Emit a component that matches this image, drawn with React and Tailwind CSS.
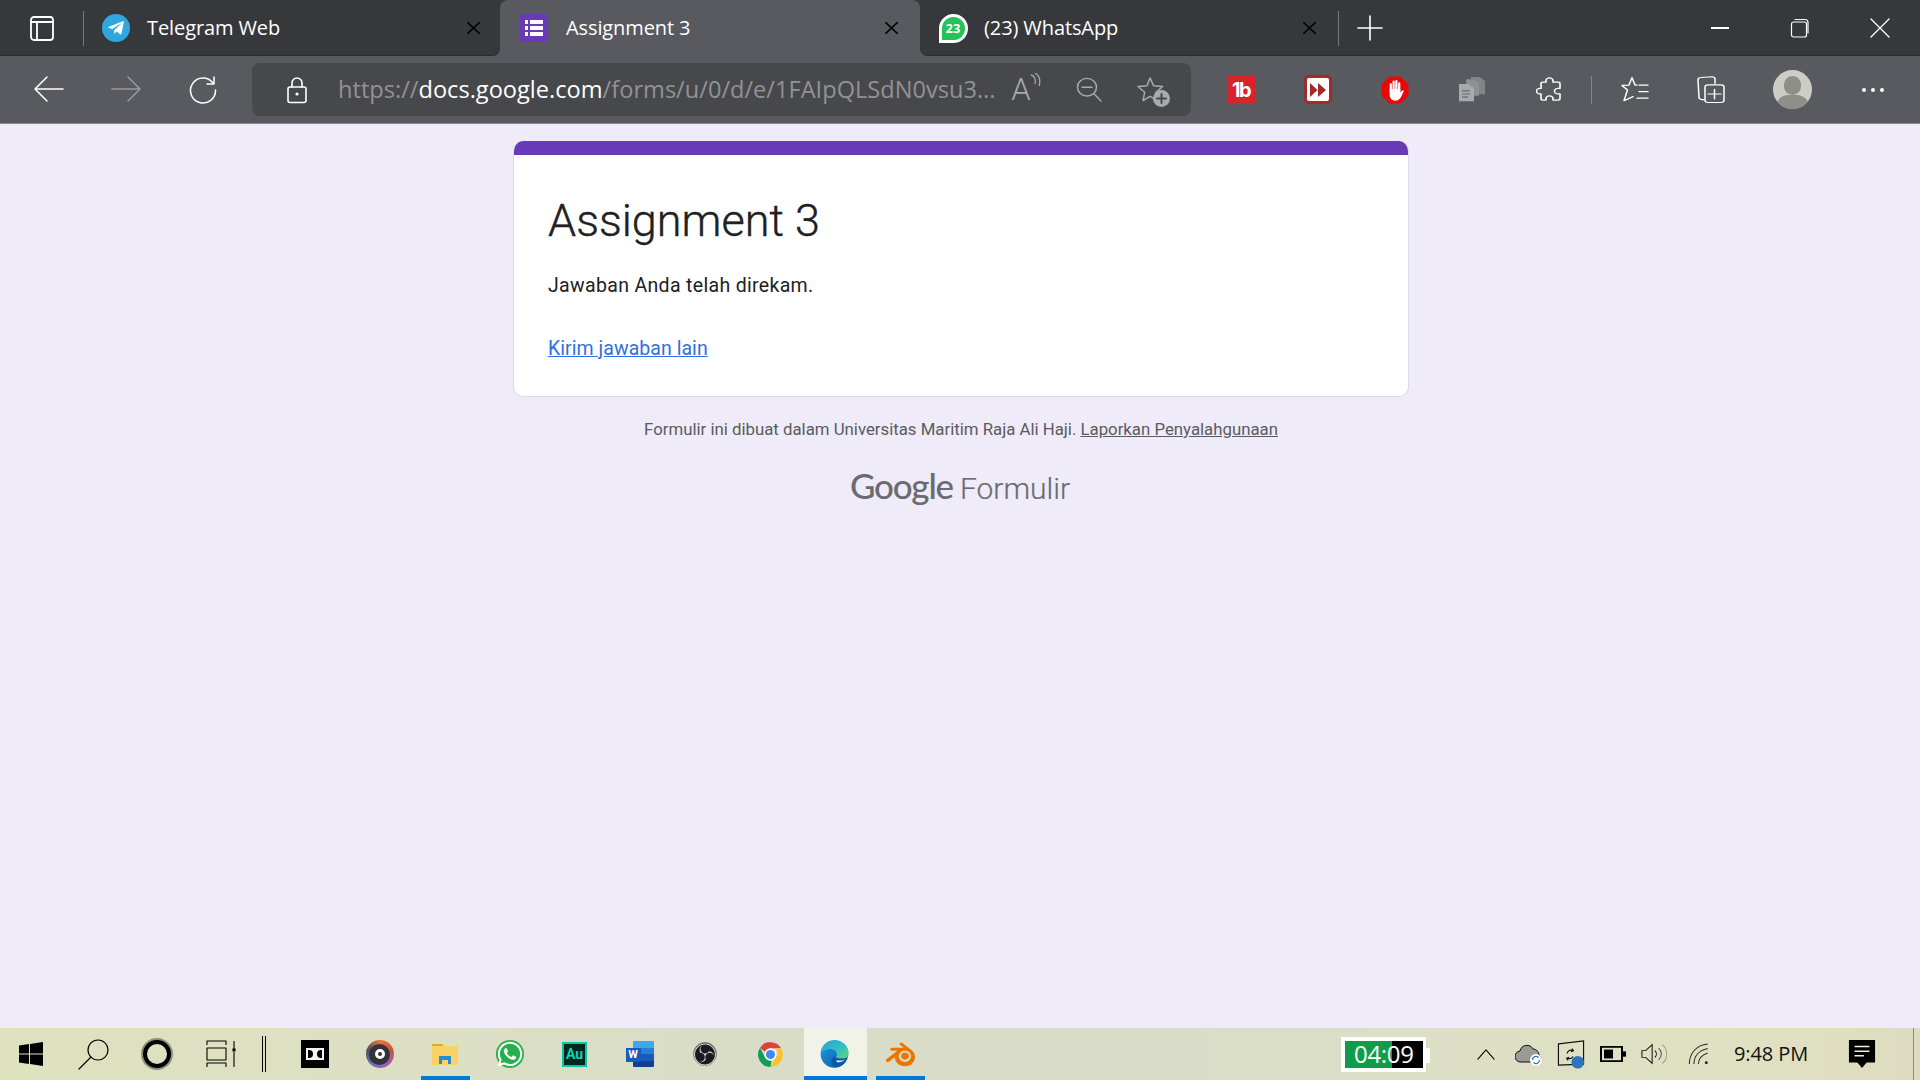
import React from "react";
import { FaTelegramPlane, FaWhatsapp } from "react-icons/fa";
import { SiObsstudio, SiBlender } from "react-icons/si";

const S = ({ w = 24, h = 24, vb = "0 0 24 24", sw = 1.5, color = "currentColor", children, className = "" }) => (
  <svg width={w} height={h} viewBox={vb} preserveAspectRatio="none" fill="none" stroke={color} strokeWidth={sw} strokeLinecap="round" strokeLinejoin="round" className={className}>{children}</svg>
);

const Close = () => (
  <S w={15} h={14} vb="0 0 16 16" sw={1.9}><path d="M2 2l12 12M14 2L2 14" /></S>
);

const FormsIcon = () => (
  <div className="w-[28px] h-[28px] bg-[#673ab7] rounded-[2px] flex flex-col justify-center gap-[2px] px-[5px]">
    {[0, 1, 2].map((i) => (
      <div key={i} className="flex gap-[2px]">
        <div className="w-[3px] h-[4px] bg-white" />
        <div className="flex-1 h-[4px] bg-white" />
      </div>
    ))}
  </div>
);

function Tab({ icon, title, active, className = "", iconClass = "ml-[16px]", textClass = "ml-[14px]", closeClass = "mr-[20px]" }) {
  return (
    <div className={`flex items-center h-full ${active ? "bg-[#595a5f] rounded-t-[8px]" : ""} ${className}`}>
      <div className={`w-[34px] flex justify-center ${iconClass}`}>{icon}</div>
      <div className={`flex-1 text-[20px] text-white tracking-[-0.1px] ${textClass}`}>{title}</div>
      <div className={`flex ${closeClass}`}><Close /></div>
    </div>
  );
}

const Slot = ({ w, children, className = "" }) => (
  <div className={`flex items-center justify-center shrink-0 h-full ${className}`} style={{ width: w }}>{children}</div>
);

const Gap = ({ w }) => <div className="shrink-0" style={{ width: w }} />;

function Chrome({ size = 28 }) {
  return (
    <svg width={size} height={size} viewBox="0 0 48 48">
      <path d="M24 2a22 22 0 0 1 19 11H24a11 11 0 0 0-10 6L5.500 12A22 22 0 0 1 24 2z" fill="#db4437" />
      <path d="M43 13a22 22 0 0 1-19 33l10-18a11 11 0 0 0 0-15z" fill="#fbc02d" />
      <path d="M5.500 12L14 29a11 11 0 0 0 10 6h2l-2 11A22 22 0 0 1 5.500 12z" fill="#0f9d58" />
      <circle cx="24" cy="24" r="10.500" fill="#fff" />
      <circle cx="24" cy="24" r="8" fill="#4285f4" />
    </svg>
  );
}

function Edge() {
  return (
    <svg width="30" height="30" viewBox="0 0 48 48">
      <defs>
        <linearGradient id="eg1" x1="0" y1="0" x2="1" y2="1">
          <stop offset="0" stopColor="#2aa5d8" />
          <stop offset="0.6" stopColor="#35c1c1" />
          <stop offset="1" stopColor="#62d86a" />
        </linearGradient>
        <linearGradient id="eg2" x1="0" y1="0" x2="1" y2="1">
          <stop offset="0" stopColor="#1b9de2" />
          <stop offset="1" stopColor="#0c59a4" />
        </linearGradient>
      </defs>
      <circle cx="23" cy="24" r="22" fill="url(#eg2)" />
      <path d="M2 22C4 9 13 2 24 2c12 0 22 9 22 21 0 5-4 8-9 8H24c-1 0 3-2 3-6 0-5-4-9-10-9C10 16 5 19 2 22z" fill="url(#eg1)" />
      <path d="M26 30c5 2 12 2 18 0-3 9-11 15-17 15-6 0-9-4-9-9 0-4 3-8 7-9-1 1 0 2 1 3z" fill="#0c59a4" />
      <path d="M27 34c5 1 10 1 14-2-3 3-8 6-13 5-2 0-2-2-1-3z" fill="#eef1e6" />
    </svg>
  );
}

function TrayClock() {
  return (
    <div className="relative shrink-0 w-[85px] h-[35px] bg-white pl-[4px] pr-[3px] py-[4px]">
      <div className="relative flex w-full h-full">
        <div className="w-[47px] bg-[#0f9d4a]" />
        <div className="flex-1 bg-black" />
        <span className="absolute inset-0 pl-[9px] font-['Open_Sans',sans-serif] text-[24px] leading-[26px] text-white whitespace-nowrap tracking-[-0.3px]">04:09</span>
      </div>
      <div className="absolute right-[-4px] top-[11px] w-[4px] h-[15px] bg-white" />
    </div>
  );
}

export default function App() {
  const ui = "font-['Open_Sans',sans-serif]";
  return (
    <div className={`w-[1920px] h-[1080px] flex flex-col overflow-hidden bg-[#f0ebf8] ${ui}`}>
      {/* Tab strip */}
      <div className="h-[56px] shrink-0 flex bg-[linear-gradient(#37383c_50%,#595a5f_50%)]">
        <div className="w-[500px] h-full flex items-center bg-[#37383c] rounded-br-[8px] shadow-[inset_0_-1px_0_#2c2d30]">
          <div className="w-[83px] flex justify-center items-center shrink-0">
            <S w={26} h={26} vb="0 0 26 26" color="#fff" sw={1.8}>
              <rect x="2" y="2" width="22" height="23" rx="3" />
              <path d="M2 7h22M8 7v18" />
            </S>
          </div>
          <div className="w-[1px] h-[35px] bg-[#77787c] shrink-0" />
          <Tab
            className="flex-1"
            iconClass="ml-[15px]"
            textClass="ml-[14px]"
            closeClass="mr-[19px]"
            title="Telegram Web"
            icon={
              <div className="w-[28px] h-[28px] rounded-full bg-[#2ea6df] flex items-center justify-center text-white">
                <FaTelegramPlane size={18} />
              </div>
            }
          />
        </div>
        <Tab active className="w-[420px]" iconClass="ml-[17px]" textClass="ml-[15px]" closeClass="mr-[21px]" title="Assignment 3" icon={<FormsIcon />} />
        <div className="w-[418px] h-full bg-[#37383c] rounded-bl-[8px] shadow-[inset_0_-1px_0_#2c2d30]">
          <Tab
            closeClass="mr-[21px]"
            title="(23) WhatsApp"
            icon={
              <div className="w-[29px] h-[29px] rounded-full rounded-bl-[4px] border-[3px] border-white bg-[#25c15a] flex items-center justify-center text-white font-bold text-[13px] leading-none">
                23
              </div>
            }
          />
        </div>
        <div className="flex-1 h-full bg-[#37383c] flex items-center shadow-[inset_0_-1px_0_#2c2d30]">
          <div className="w-[1px] h-[35px] bg-[#77787c]" />
          <Slot w={61} className="!h-auto">
            <S w={26} h={26} vb="0 0 26 26" color="#fff" sw={1.6}><path d="M13 1v24M1 13h24" /></S>
          </Slot>
          <div className="flex-1" />
          <Slot w={80}><div className="w-[18px] h-[1.5px] bg-white" /></Slot>
          <Slot w={80}>
            <S w={20} h={20} vb="0 0 20 20" color="#fff" sw={1.2}>
              <rect x="1.500" y="4" width="15" height="15" rx="2" />
              <path d="M5 1.500h10a3 3 0 0 1 3 3V15" />
            </S>
          </Slot>
          <Slot w={80}>
            <S w={20} h={20} vb="0 0 20 20" color="#fff" sw={1.3}><path d="M1 1l18 18M19 1L1 19" /></S>
          </Slot>
        </div>
      </div>

      {/* Toolbar */}
      <div className="h-[68px] shrink-0 bg-[#595a5f] border-b border-[#8b8c92] flex items-center">
        <Slot w={98}>
          <S w={32} h={28} vb="0 0 32 28" color="#fff" sw={1.5} className="-mt-[2px]"><path d="M2 14h28M14 2L2 14l12 12" /></S>
        </Slot>
        <Slot w={56}>
          <S w={32} h={28} vb="0 0 32 28" color="#9a9b9f" sw={1.5} className="-mt-[2px]"><path d="M2 14h28M18 2l12 12-12 12" /></S>
        </Slot>
        <Slot w={98}>
          <S w={30} h={30} vb="0 0 30 30" color="#fff" sw={1.5}>
            <path d="M25 8A12.500 12.500 0 1 0 27.500 15M26 2v7h-7" />
          </S>
        </Slot>
        <div className="w-[939px] h-[53px] rounded-[8px] bg-[#47484c] flex items-center shrink-0">
          <Slot w={90}>
            <S w={22} h={28} vb="0 0 22 28" color="#fff" sw={1.6}>
              <rect x="2" y="11" width="18" height="15.500" rx="2" />
              <path d="M6 11V7a5 5 0 0 1 10 0v4" />
              <circle cx="11" cy="18" r="0.800" fill="#fff" />
            </S>
          </Slot>
          <div className="w-[660px] shrink-0 text-[23.600px] whitespace-nowrap text-[#919295] -ml-[4px]">
            https://<span className="text-white">docs.google.com</span>/forms/u/0/d/e/1FAIpQLSdN0vsu3...
          </div>
          <Slot w={64} className="-ml-[5px]">
            <span className="relative font-['Roboto',sans-serif] text-[31px] text-[#a9aaad] leading-none font-light pr-[8px]">
              A
              <svg width="12" height="16" viewBox="0 0 12 16" className="absolute right-[-3px] top-[-1px]" fill="none" stroke="#a9aaad" strokeWidth="1.300">
                <path d="M1 2c4 1 5 5 4 9M5 0c4 2 6 7 4 13" />
              </svg>
            </span>
          </Slot>
          <Slot w={64}>
            <S w={26} h={26} vb="0 0 26 28" color="#a9aaad" sw={1.5}>
              <circle cx="11" cy="11" r="9.500" /><path d="M6 11h10M18 18l7 8" />
            </S>
          </Slot>
          <Slot w={60}>
            <div className="relative">
              <S w={30} h={28} vb="0 0 30 30" color="#a9aaad" sw={1.5}>
                <path d="M14 2l3.600 8.500 9 .8-6.500 6 1.800 9-7.900-4.500-7 4.500 1.700-9L2 11.300l9-.8z" />
              </S>
              <div className="absolute right-[-4px] bottom-[-3px] w-[17px] h-[17px] rounded-full bg-[#a9aaad] flex items-center justify-center">
                <S w={11} h={11} vb="0 0 11 11" color="#47484c" sw={2}><path d="M5.500 1v9M1 5.500h9" /></S>
              </div>
            </div>
          </Slot>
          <div className="flex-1" />
        </div>

        <Gap w={36} />
        {/* Extensions */}
        <div className="w-[28px] h-[28px] bg-[#d9232a] text-white flex items-center justify-center font-bold text-[20px] tracking-[-1.5px] shrink-0 font-['Inter',sans-serif]">1b</div>
        <Gap w={49.5} />
        <div className="w-[26px] h-[27px] rounded-[4px] bg-white border-[2px] border-[#a82a2a] shadow-[0_0_1px_1px_#8e2f2f] flex items-center justify-center shrink-0">
          <svg width="16" height="14" viewBox="0 0 16 14" fill="#a42a2a"><path d="M0 0l7.500 7L0 14zM8 0l8 7-8 7z" /></svg>
        </div>
        <Gap w={49} />
        <svg width="30" height="28" viewBox="0 0 30 30" className="shrink-0">
          <path d="M9 0.500h12L29.500 9v12L21 29.500H9L.5 21V9z" fill="#e80808" />
          <path d="M10.500 16V9M13.500 16V6M16.500 16V5.500M19.500 16V8" stroke="#fff" strokeWidth="2.400" strokeLinecap="round" fill="none" />
          <path d="M9.300 14h11.400v4c1-2 2.300-3.300 3.300-2.600.8.600 0 2-1.500 5-1.500 3.500-3.500 6-7 6-4 0-6.200-2.500-6.200-6z" fill="#fff" />
        </svg>
        <Gap w={49} />
        <svg width="26" height="25" viewBox="0 0 26 32" preserveAspectRatio="none" className="shrink-0" fill="#9d9ea1">
          <path d="M12 0h9l5 5v17h-9V10l-5-4z" fill="#828387" />
          <path d="M7 3h8l5 5v16H7z" fill="#8f9094" />
          <path d="M0 9h9l6 5v17H0z" fill="#a9aaad" />
          <path d="M3 17h8v1.500H3zM3 21h8v1.500H3zM3 25h6v1.500H3z" fill="#68696d" />
        </svg>
        <Gap w={51} />
        <S w={26} h={28} vb="0 0 26 36" color="#fff" sw={1.6} className="shrink-0">
          <path d="M10 8V6a3.500 3.500 0 0 1 7 0v2h5a2 2 0 0 1 2 2v6h-2a3.500 3.500 0 0 0 0 7h2v6a2 2 0 0 1-2 2h-5v-2a3.500 3.500 0 0 0-7 0v2H7a2 2 0 0 1-2-2v-6H4a3.500 3.500 0 0 1 0-7h1v-6a2 2 0 0 1 2-2z" />
        </S>
        <Gap w={29} />
        <div className="w-[1px] h-[28px] bg-[#85868a] shrink-0" />
        <Gap w={29} />
        <S w={28} h={28} vb="0 0 28 34" color="#fff" sw={1.5} className="shrink-0">
          <path d="M11 2l3 9h2M11 2L8 11l-7 .5 5.500 5.500L3 30l9-5M18 11h9M18 19h9M16 27h11" />
        </S>
        <Gap w={48} />
        <S w={28} h={28} vb="0 0 28 38" color="#fff" sw={1.5} className="shrink-0">
          <path d="M7 32H5a3 3 0 0 1-3-3L1 5a3 3 0 0 1 3-3l11-1a3 3 0 0 1 3 3v6" />
          <rect x="8" y="12" width="19" height="24" rx="3" />
          <path d="M17.500 18v13M11 24.500h13" />
        </S>
        <Gap w={48} />
        <div className="w-[39px] h-[39px] rounded-full bg-[#cdcdc8] overflow-hidden relative shrink-0">
          <div className="absolute left-[11px] top-[6px] w-[17px] h-[19px] rounded-full bg-[#8f8e88]" />
          <div className="absolute left-[3px] top-[25px] w-[33px] h-[24px] rounded-full bg-[#8f8e88]" />
        </div>
        <Gap w={50} />
        <div className="flex gap-[5px] shrink-0">
          {[0, 1, 2].map((i) => <div key={i} className="w-[4px] h-[4px] rounded-full bg-white" />)}
        </div>
      </div>

      {/* Page */}
      <div className="flex-1 flex flex-col items-center">
        <div className="w-[896px] mt-[17px] ml-[2px] rounded-[10px] overflow-hidden bg-white border-x border-b border-[#dadce0]">
          <div className="h-[14px] bg-[#673ab7] -mx-[1px]" />
          <div className="pl-[34px] pt-[39px] h-[241px]">
            <div className="font-['Roboto',sans-serif] text-[45px] leading-[54px] text-[#202124] font-light [-webkit-text-stroke:0.4px_#202124]">Assignment 3</div>
            <div className="font-['Roboto',sans-serif] text-[19.500px] leading-[26px] text-[#202124] tracking-[0.33px] mt-[25px]">Jawaban Anda telah direkam.</div>
            <a className="block font-['Roboto',sans-serif] text-[19.500px] leading-[26px] text-[#2f6fe4] underline tracking-[0.05px] mt-[37px] w-fit">Kirim jawaban lain</a>
          </div>
        </div>
        <div className="mt-[22px] ml-[2px] font-['Roboto',sans-serif] text-[16.800px] leading-[20px] text-[#5a5b60]">
          Formulir ini dibuat dalam Universitas Maritim Raja Ali Haji. <a className="underline">Laporkan Penyalahgunaan</a>
        </div>
        <div className="mt-[26px] flex items-baseline text-[#6a6b70] leading-[40px]">
          <span className="font-['Lato',sans-serif] text-[35px] font-medium tracking-[-1.200px]">Google</span>
          <span className="font-['Roboto',sans-serif] text-[30px] font-light ml-[7px] [-webkit-text-stroke:0.2px_#6a6b70]">Formulir</span>
        </div>
      </div>

      {/* Taskbar */}
      <div className="h-[52px] shrink-0 flex items-center text-black bg-[linear-gradient(90deg,#dfe2bf_0%,#d9ddc7_40%,#d9ddc8_60%,#e0e1c2_90%,#dedcc0_100%)]">
        <Slot w={62}>
          <svg width="24" height="24" viewBox="0 0 24 24" fill="#000"><path d="M0 3.500l10-1.400v9.400H0zM11 2l13-2v11.500H11zM0 12.500h10v9.400L0 20.500zM11 12.500h13V24l-13-2z" /></svg>
        </Slot>
        <Slot w={63}>
          <S w={32} h={32} vb="0 0 32 32" color="#000" sw={1.2}><circle cx="20" cy="12" r="10" /><path d="M13 19L1 31" /></S>
        </Slot>
        <Slot w={64}>
          <div className="w-[30px] h-[30px] rounded-full border-[5px] border-black outline outline-[2px] outline-[#8e8f80] -outline-offset-[1px]" />
        </Slot>
        <Slot w={64}>
          <S w={31} h={28} vb="0 0 31 28" color="#000" sw={1.1}>
            <path d="M1 5V1h19v4M1 8h19v12H1zM1 27v-4h19v4M28 1v8M28 12v15" strokeLinecap="butt" />
            <rect x="26.500" y="8.500" width="3" height="3" fill="#000" stroke="none" />
          </S>
        </Slot>
        <div className="w-[22px] mr-[7px] h-full flex items-center justify-center shrink-0 gap-[2.500px]">
          <div className="w-[1px] h-[36px] bg-black" /><div className="w-[1px] h-[36px] bg-black" />
        </div>
        <Slot w={65}>
          <svg width="28" height="28" viewBox="0 0 28 28">
            <rect width="28" height="28" fill="#000" />
            <rect x="5" y="8" width="18" height="12" fill="#f4f4f4" />
            <path d="M7 10h1a4 4 0 0 1 0 8H7z" fill="#000" />
            <path d="M21 10h-1a4 4 0 0 0 0 8h1z" fill="#000" />
          </svg>
        </Slot>
        <Slot w={65}>
          <div className="w-[28px] h-[28px] rounded-full bg-[conic-gradient(#e8743a,#c8574a,#a35bbd,#6c74c0,#50505a,#e8743a)] flex items-center justify-center">
            <div className="w-[21px] h-[21px] rounded-full bg-[#33333a] flex items-center justify-center">
              <div className="w-[10px] h-[10px] rounded-full bg-white flex items-center justify-center"><div className="w-[4px] h-[4px] rounded-full bg-[#33333a]" /></div>
            </div>
          </div>
        </Slot>
        <Slot w={65} className="relative">
          <svg width="26" height="22" viewBox="0 0 26 22">
            <path d="M0 2a1 1 0 0 1 1-1h9l2 2H0z" fill="#e6a31c" />
            <path d="M0 3h25a1 1 0 0 1 1 1v17a1 1 0 0 1-1 1H1a1 1 0 0 1-1-1z" fill="#fad165" />
            <path d="M7 21v-7a1 1 0 0 1 1-1h10a1 1 0 0 1 1 1v7h-3v-4h-6v4z" fill="#1c8fd9" />
          </svg>
          <div className="absolute left-[9px] right-[7px] bottom-0 h-[4px] bg-[#0078d7]" />
        </Slot>
        <Slot w={65}>
          <div className="w-[28px] h-[28px] rounded-full bg-[#25b04c] flex items-center justify-center text-white">
            <FaWhatsapp size={28} />
          </div>
        </Slot>
        <Slot w={65}>
          <div className="w-[25px] h-[25px] bg-[#00261f] border-[2px] border-[#00c8a8] flex items-center justify-center text-[#00e4bb] text-[14px] font-semibold leading-none font-['Roboto',sans-serif]">Au</div>
        </Slot>
        <Slot w={65}>
          <div className="relative w-[28px] h-[26px]">
            <div className="absolute left-[7px] top-0 right-0 bottom-0 overflow-hidden rounded-[1px] flex flex-col">
              <div className="flex-1 bg-[#41a5ee]" /><div className="flex-1 bg-[#2b7cd3]" /><div className="flex-1 bg-[#185abd]" /><div className="flex-1 bg-[#103f91]" />
            </div>
            <div className="absolute left-0 top-[7px] w-[15px] h-[14px] bg-[#185abd] text-white text-[11px] font-bold leading-[14px] text-center font-['Roboto',sans-serif]">W</div>
          </div>
        </Slot>
        <Slot w={65}>
          <div className="w-[24px] h-[24px] rounded-full bg-[#1d1a1f] text-[#d9d9d9] flex items-center justify-center border border-[#8b8b88]"><SiObsstudio size={23} /></div>
        </Slot>
        <Slot w={67}><Chrome size={27} /></Slot>
        <Slot w={63} className="relative bg-[#f1f3e9]">
          <div className="flex -ml-[2px]"><Edge /></div>
          <div className="absolute left-0 right-0 bottom-0 h-[4px] bg-[#0078d7]" />
        </Slot>
        <Slot w={72} className="relative">
          <div className="text-[#ea7600] -ml-[6px]"><SiBlender size={29} /></div>
          <div className="absolute left-[9px] w-[49px] bottom-0 h-[4px] bg-[#0078d7]" />
        </Slot>
        <div className="flex-1" />

        {/* Tray */}
        <TrayClock />
        <Gap w={40} />
        <Slot w={40}>
          <S w={18} h={11} vb="0 0 20 12" color="#000" sw={1.2}><path d="M1 11L10 1l9 10" /></S>
        </Slot>
        <Slot w={46}>
          <svg width="28" height="24" viewBox="0 0 28 24">
            <path d="M6 20a5.500 5.500 0 0 1-1-11 7 7 0 0 1 13-2 6 6 0 0 1 6 6 4 4 0 0 1 0 7z" fill="#9a9b95" stroke="#111" strokeWidth="1" />
            <circle cx="21" cy="18" r="6" fill="#fff" />
            <path d="M17.500 18a3.500 3.500 0 0 1 6-2.500M24.500 18a3.500 3.500 0 0 1-6 2.500" fill="none" stroke="#2b78c5" strokeWidth="1.300" />
          </svg>
        </Slot>
        <Slot w={38}>
          <svg width="28" height="29" viewBox="0 0 28 30">
            <path d="M1 4l26-3v24L1 26z" fill="none" stroke="#111" strokeWidth="1.200" />
            <path d="M10 14a4 4 0 0 1 6-3M15 9l1.500 2-2.500 1M16 17a4 4 0 0 1-5 2M11 21l-1.500-2 2.500-1" fill="none" stroke="#111" strokeWidth="1.200" />
            <circle cx="21" cy="23" r="6.500" fill="#2f72bd" />
          </svg>
        </Slot>
        <Slot w={46}>
          <svg width="26" height="16" viewBox="0 0 26 18" preserveAspectRatio="none">
            <rect x="1" y="1" width="21" height="16" fill="none" stroke="#000" strokeWidth="2" />
            <rect x="4" y="4" width="9" height="10" fill="#000" />
            <rect x="23" y="6" width="3" height="6" fill="#000" />
          </svg>
        </Slot>
        <Slot w={36}>
          <svg width="26" height="22" viewBox="0 0 28 26" preserveAspectRatio="none" fill="none" strokeWidth="1.100">
            <path d="M1 9h4l7-7v22l-7-7H1z" stroke="#111" />
            <path d="M15 9a6 6 0 0 1 0 8" stroke="#111" />
            <path d="M19 6a10 10 0 0 1 0 14" stroke="#555" />
            <path d="M23 2a15 15 0 0 1 0 22" stroke="#999" />
          </svg>
        </Slot>
        <Slot w={52}>
          <svg width="21" height="22" viewBox="0 0 22 24" fill="none" stroke="#222" strokeWidth="1.100">
            <path d="M1 23C1 11 9 2 21 1" />
            <path d="M6 23c0-9 6-15 15-17" />
            <path d="M11 23c0-6 4-10 10-12" />
            <circle cx="19.500" cy="21.500" r="1.600" fill="#222" stroke="none" />
          </svg>
        </Slot>
        <Gap w={10} />
        <div className="w-[76px] text-[20px] tracking-[-0.1px] leading-none whitespace-nowrap shrink-0 text-[#111]">9:48 PM</div>
        <Slot w={103}>
          <svg width="28" height="28" viewBox="0 0 28 30">
            <path d="M0 0h28v24H19l-5 6-5-6H0z" fill="#000" />
            <path d="M6 7h16M6 12h16M6 17h10" stroke="#f0f0dc" strokeWidth="1.600" />
          </svg>
        </Slot>
        <div className="w-[1px] h-full bg-[#8c8c78] shrink-0" />
        <Gap w={6} />
      </div>
    </div>
  );
}
